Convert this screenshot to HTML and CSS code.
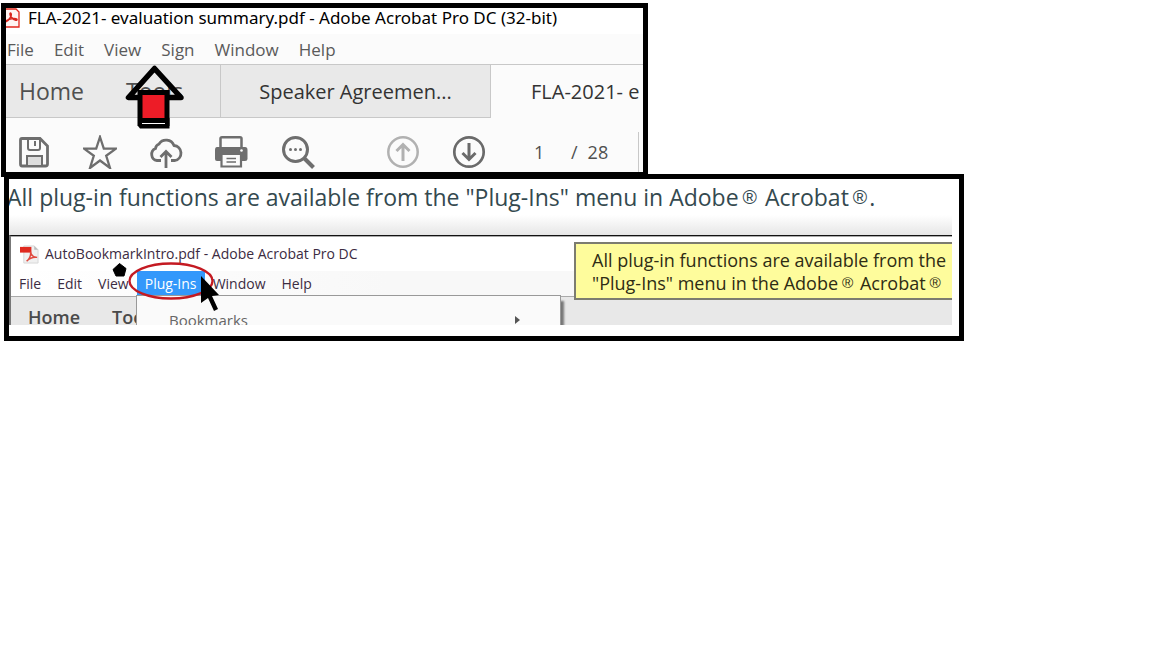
FILE: index.html
```
<!DOCTYPE html>
<html lang="en">
<head>
<meta charset="utf-8">
<title>Plug-Ins menu in Adobe Acrobat</title>
<link rel="stylesheet" href="styles.css">
</head>
<body>
<main class="page">
  <section class="panel viewer">
    <header class="titlebar">
      <svg class="pdf-icon" viewBox="0 0 14 20" aria-hidden="true">
        <path d="M-6 1H10L13 4V19H-6Z" fill="#fff4f2" stroke="#e2261b" stroke-width="1.3"/>
        <path d="M-1 14C3 13 6 8 5 5.500C4 4 3 7 6 10C8 12 11 13 11 11.500C11 10 4 10 0 13" fill="none" stroke="#d9251d" stroke-width="1.600"/>
      </svg>
      <span class="title">FLA-2021- evaluation summary.pdf - Adobe Acrobat Pro DC (32-bit)</span>
    </header>
    <nav class="menubar">
      <button class="menu">File</button>
      <button class="menu">Edit</button>
      <button class="menu">View</button>
      <button class="menu">Sign</button>
      <button class="menu">Window</button>
      <button class="menu">Help</button>
    </nav>
    <div class="tabs">
      <div class="home-tabs">
        <button class="tab-link">Home</button>
        <button class="tab-link">Tools</button>
      </div>
      <button class="tab">Speaker Agreemen...</button>
      <button class="tab tab-active">FLA-2021- e</button>
    </div>
    <div class="toolbar">
      <button class="tool" aria-label="Save">
        <svg viewBox="0 0 34 34"><path d="M5 3.500H23L30.500 11V29Q30.500 31 28.500 31H5Q3.500 31 3.500 29V5Q3.500 3.500 5 3.500Z" fill="none" stroke="#6e6e6e" stroke-width="2.800"/><path d="M11 3V13Q11 15 13 15H21Q23 15 23 13V3M10 31V21H25V31" fill="none" stroke="#6e6e6e" stroke-width="2"/><path d="M11 22H24V30H11Z" fill="#dedede"/><path d="M18 6V11" stroke="#6e6e6e" stroke-width="2"/></svg>
      </button>
      <button class="tool" aria-label="Add to favorites">
        <svg viewBox="0 0 34 34"><path d="M17 2L20.800 13.600H33L23.200 20.800L27 33L17 25.500L7 33L10.800 20.800L1 13.600H13.200Z" fill="none" stroke="#6e6e6e" stroke-width="2.300"/></svg>
      </button>
      <button class="tool" aria-label="Upload">
        <svg viewBox="0 0 34 34"><path d="M12 25.500H8A6.300 6.300 0 0 1 6.500 13.500A5.500 5.500 0 0 1 10 9A8.500 8.500 0 0 1 25 10.500A7.600 7.600 0 0 1 26 25.500H22" fill="none" stroke="#6e6e6e" stroke-width="2.800"/><path d="M17 33V17M11.500 22L17 16.500L22.500 22" fill="none" stroke="#6e6e6e" stroke-width="2.800"/></svg>
      </button>
      <button class="tool" aria-label="Print">
        <svg viewBox="0 0 34 34"><path d="M5.500 14V3.500Q5.500 2.200 7 2.200H25Q26.500 2.200 26.500 3.500V14" fill="none" stroke="#6e6e6e" stroke-width="2.500"/><path d="M2 12H30Q32.500 12 32.500 15V24Q32.500 26 30 26H2Q0 26 0 24V15Q0 12 2 12Z" fill="#6e6e6e"/><path d="M6.500 19H26V31.500H6.500Z" fill="#fbfbfb" stroke="#6e6e6e" stroke-width="2.200"/><path d="M11.500 23.500H21M11.500 27H21" stroke="#6e6e6e" stroke-width="1.700"/><circle cx="26.500" cy="15.500" r="1.300" fill="#fff"/></svg>
      </button>
      <button class="tool" aria-label="Find">
        <svg viewBox="0 0 34 34"><circle cx="14.500" cy="14.500" r="12" fill="none" stroke="#6e6e6e" stroke-width="3"/><path d="M23.500 23.500L32.500 32.500" stroke="#6e6e6e" stroke-width="4"/><g fill="#6e6e6e"><circle cx="9.500" cy="14.500" r="1.500"/><circle cx="14.500" cy="14.500" r="1.500"/><circle cx="19.500" cy="14.500" r="1.500"/></g></svg>
      </button>
      <button class="tool tool-previous" aria-label="Previous page">
        <svg viewBox="0 0 34 34"><g fill="none" stroke="#b1b1b1"><circle cx="17" cy="17" r="14.700" stroke-width="2.500"/><path d="M17 26V10M10.500 16L17 9.500L23.500 16" stroke-width="3"/></g></svg>
      </button>
      <button class="tool" aria-label="Next page">
        <svg viewBox="0 0 34 34"><g fill="none" stroke="#6a6a6a"><circle cx="17" cy="17" r="14.700" stroke-width="2.700"/><path d="M17 8V24M10.500 18L17 24.500L23.500 18" stroke-width="3"/></g></svg>
      </button>
      <div class="pager">
        <input class="page-number" type="text" value="1" aria-label="Page number">
        <span>/</span>
        <span class="page-total">28</span>
      </div>
    </div>
    <svg class="arrow" viewBox="0 0 60 66" aria-hidden="true">
      <path d="M30.500 4.500L4.500 33.500H57Z" fill="none" stroke="#000" stroke-width="5.500" stroke-linejoin="round"/>
      <path d="M16 28.500H43V59.500H16Z" fill="#ed1c27" stroke="#000" stroke-width="5"/>
      <path d="M14 54H45.500V64.500H16L14 62Z" fill="#000"/>
      <path d="M18 59.500H41" stroke="#fff" stroke-width="1"/>
    </svg>
  </section>

  <section class="panel guide">
    <h1 class="intro">All plug-in functions are available from the "Plug-Ins" menu in Adobe<span class="reg">®</span> Acrobat<span class="reg">®</span>.</h1>
    <div class="shade"></div>
    <div class="shot">
      <div class="shot-title">
        <svg class="shot-pdf" viewBox="0 0 20 20" aria-hidden="true"><path d="M4 1H15L19 5V19H4Z" fill="#f0f0f0" stroke="#d8d8d8"/><path d="M15 1V5H19Z" fill="#bbb"/><path d="M0 2H12V8H0Z" fill="#e02a20"/><path d="M7 17Q12 13 11 7Q12 13 18 13Q12 12 7 17" fill="none" stroke="#e04a40" stroke-width="1.500"/></svg>
        <span>AutoBookmarkIntro.pdf - Adobe Acrobat Pro DC</span>
      </div>
      <div class="shot-menubar">
        <button class="shot-item">File</button>
        <button class="shot-item">Edit</button>
        <button class="shot-item">View</button>
        <button class="shot-item shot-selected">Plug-Ins</button>
        <button class="shot-item">Window</button>
        <button class="shot-item">Help</button>
      </div>
      <div class="shot-tabs">
        <span class="shot-home">Home</span>
        <span class="shot-tools">Too</span>
      </div>
      <div class="dropdown"><button class="dropdown-item"><span>Bookmarks</span><svg class="chevron" viewBox="0 0 6 10" aria-hidden="true"><path d="M0 1L5 5L0 9Z" fill="#555"/></svg></button></div>
      <p class="callout">All plug-in functions are available from the<br>"Plug-Ins" menu in the Adobe<span class="reg">®</span> Acrobat<span class="reg">®</span></p>
      <svg class="marks" viewBox="0 0 120 60" aria-hidden="true">
        <ellipse cx="61" cy="23" rx="41.500" ry="17.500" fill="none" stroke="#c41a22" stroke-width="2.300"/>
        <path d="M9.500 5.500L16 10.500L14 18H6L3 11.500Z" fill="#000" stroke="#000"/>
        <path d="M91 18L109 37L102 38L108 51L104 53L98 40L91 45Z" fill="#000"/>
      </svg>
    </div>
  </section>
</main>
</body>
</html>
```
FILE: styles.css
```
* {
  box-sizing: border-box;
}

body {
  margin: 0;
  background: #fff;
  font-family: "Open Sans", "Noto Sans", sans-serif;
}

button {
  padding: 0;
  border: 0;
  background: none;
  color: inherit;
  font: inherit;
  white-space: nowrap;
}

.page {
  padding: 3px 0 0 1px;
}

.panel {
  position: relative;
  border: 5px solid #000;
  overflow: hidden;
}

.viewer {
  width: 56.2%;
  background: #fbfbfb;
}

.titlebar {
  display: flex;
  align-items: center;
  gap: 8px;
  height: 26px;
  padding-bottom: 6px;
  background: #fff;
  color: #000;
  font-family: "Noto Sans", "Open Sans", sans-serif;
  font-size: 17px;
  line-height: 20px;
  white-space: nowrap;
}

.pdf-icon {
  flex: none;
  width: 14px;
  height: 20px;
}

.menubar {
  display: flex;
  gap: 20px;
  height: 31px;
  padding-left: 1px;
  border-bottom: 1px solid #c8c8c8;
  color: #5a5a5a;
  font-size: 17px;
  line-height: 31px;
}

.tabs {
  display: flex;
  height: 53px;
  color: #333;
  font-size: 20px;
}

.home-tabs {
  display: flex;
  flex: none;
  gap: 42px;
  width: 215px;
  padding-left: 13px;
  border-right: 1px solid #c8c8c8;
  border-bottom: 1px solid #c8c8c8;
  background: #e9e9e9;
  color: #505050;
  font-size: 23px;
}

.tab {
  flex: none;
  width: 270px;
  border-right: 1px solid #c8c8c8;
  border-bottom: 1px solid #c8c8c8;
  background: #e9e9e9;
}

.tab-active {
  flex: 1;
  min-width: 0;
  padding-left: 40px;
  border: 0;
  background: #fbfbfb;
  text-align: left;
}

.toolbar {
  display: flex;
  align-items: flex-end;
  gap: 32px;
  padding: 14px 0 0 11px;
}

.tool {
  flex: none;
  width: 34px;
  height: 37px;
}

.tool svg {
  display: block;
  width: 34px;
  height: 34px;
  margin-bottom: 3px;
}

.tool-previous {
  margin-left: 39px;
}

.pager {
  display: flex;
  flex: 1;
  align-items: center;
  height: 40px;
  margin-right: 4px;
  padding-left: 16px;
  border-right: 1px solid #c8c8c8;
  color: #505050;
  font-size: 18px;
}

.page-number {
  width: 37px;
  padding: 0;
  border: 0;
  background: none;
  color: inherit;
  font: inherit;
}

.page-total {
  margin-left: 10px;
}

.arrow {
  position: absolute;
  left: 118px;
  top: 56px;
  width: 60px;
  height: 66px;
}

.guide {
  width: 83.4%;
  margin: -3px 0 0 3px;
  padding-bottom: 11px;
  background: #fff;
}

.intro {
  height: 36px;
  margin: 0 0 0 -2px;
  color: #34494f;
  font-size: 23px;
  font-weight: 400;
  line-height: 37px;
  white-space: nowrap;
}

.reg {
  margin: 0 2px 0 4px;
  font-family: "Liberation Sans", sans-serif;
  font-size: 85%;
  line-height: 1;
  vertical-align: 2px;
}

.shade {
  height: 20px;
  margin-right: 7px;
  background: linear-gradient(#fff, #e6e6e6);
}

.shot {
  position: relative;
  margin-right: 7px;
  border-top: 1px solid #111;
  border-left: 2px solid #777;
  background: #fff;
  overflow: hidden;
}

.shot-title {
  display: flex;
  align-items: center;
  gap: 6px;
  height: 35px;
  padding-left: 9px;
  border-top: 1px solid #aaa;
  color: #3c2c42;
  font-size: 14px;
  line-height: 20px;
}

.shot-pdf {
  width: 19px;
  height: 19px;
}

.shot-menubar {
  display: flex;
  gap: 16px;
  height: 26px;
  padding-left: 8px;
  border-bottom: 1px solid #aaa;
  background: linear-gradient(90deg, #fff, #f8f8f8 40%);
  color: #3c2c42;
  font-size: 14px;
  line-height: 24px;
}

.shot-selected {
  width: 68px;
  margin: 0 -8px;
  background: #3398fb;
  color: #fff;
}

.shot-tabs {
  display: flex;
  gap: 32px;
  height: 28px;
  padding-left: 17px;
  background: #e8e8e8;
  color: #4a4a4a;
  font-size: 18px;
  font-weight: 600;
  line-height: 41px;
}

.dropdown {
  position: absolute;
  left: 125px;
  top: 59px;
  width: 425px;
  height: 40px;
  border: 1px solid #999;
  background: #fafafa;
  box-shadow: 3px 6px 2px #777;
}

.dropdown-item {
  display: flex;
  align-items: center;
  justify-content: space-between;
  width: 100%;
  height: 48px;
  padding: 0 39px 0 32px;
  color: #666;
  font-size: 15px;
}

.chevron {
  width: 6px;
  height: 10px;
}

.callout {
  position: absolute;
  left: 563px;
  right: 0;
  top: 6px;
  margin: 0;
  padding: 5px 0 3px 16px;
  border: 2px solid #7c7c70;
  border-right: 0;
  background: #fefc9c;
  color: #2e2c14;
  font-size: 18px;
  line-height: 23px;
  white-space: nowrap;
}

.marks {
  position: absolute;
  left: 99px;
  top: 22px;
  width: 120px;
  height: 60px;
}
```
